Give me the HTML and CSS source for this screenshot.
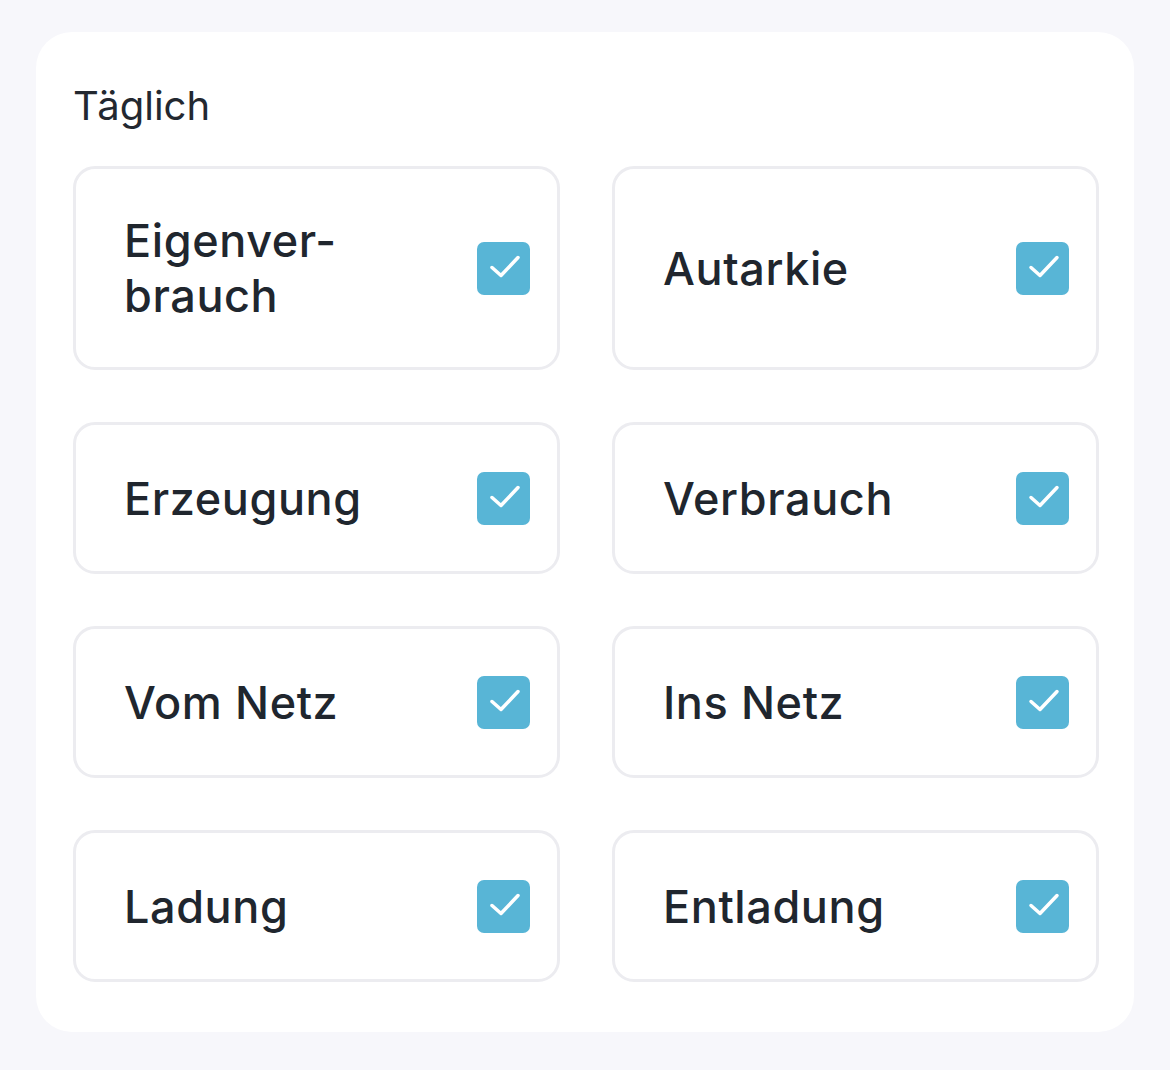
FILE: index.html
```html
<!DOCTYPE html>
<html lang="de">
<head>
<meta charset="utf-8">
<link rel="stylesheet" href="styles.css">
</head>
<body>
<div class="page">
  <section class="card">
    <h2 class="title">Täglich</h2>
    <div class="grid">
      <label class="tile tall"><span class="label">Eigenver&shy;brauch</span><span class="box"><svg viewBox="0 0 53 53"><path d="M15 25.5 L24 33.5 L41 15.5"/></svg></span></label>
      <label class="tile tall"><span class="label">Autarkie</span><span class="box"><svg viewBox="0 0 53 53"><path d="M15 25.5 L24 33.5 L41 15.5"/></svg></span></label>
      <label class="tile"><span class="label">Erzeugung</span><span class="box"><svg viewBox="0 0 53 53"><path d="M15 25.5 L24 33.5 L41 15.5"/></svg></span></label>
      <label class="tile"><span class="label">Verbrauch</span><span class="box"><svg viewBox="0 0 53 53"><path d="M15 25.5 L24 33.5 L41 15.5"/></svg></span></label>
      <label class="tile"><span class="label">Vom Netz</span><span class="box"><svg viewBox="0 0 53 53"><path d="M15 25.5 L24 33.5 L41 15.5"/></svg></span></label>
      <label class="tile"><span class="label">Ins Netz</span><span class="box"><svg viewBox="0 0 53 53"><path d="M15 25.5 L24 33.5 L41 15.5"/></svg></span></label>
      <label class="tile"><span class="label">Ladung</span><span class="box"><svg viewBox="0 0 53 53"><path d="M15 25.5 L24 33.5 L41 15.5"/></svg></span></label>
      <label class="tile"><span class="label">Entladung</span><span class="box"><svg viewBox="0 0 53 53"><path d="M15 25.5 L24 33.5 L41 15.5"/></svg></span></label>
    </div>
  </section>
</div>
</body>
</html>
```
FILE: styles.css
```css
* { box-sizing: border-box; }
html, body { margin: 0; padding: 0; }
body {
  background: #f7f7fb;
  font-family: Inter, "Noto Sans", sans-serif;
  color: #20262e;
  width: 1170px;
  height: 1070px;
}
.page {
  padding: 32px 36px 38px 36px;
}
.card {
  background: #ffffff;
  border-radius: 36px;
  padding: 54px 36px 51px 37px;
  height: 1000px;
}
.title {
  margin: 0 0 40px 0;
  font-size: 40px;
  line-height: 40px;
  font-weight: 400;
  color: #232830;
  height: 40px;
}
.grid {
  display: grid;
  grid-template-columns: 487px 487px;
  column-gap: 52px;
  row-gap: 52px;
}
.tile {
  display: flex;
  align-items: center;
  justify-content: space-between;
  border: 3px solid #ececf0;
  border-radius: 22px;
  min-height: 152px;
  padding: 44px 27px 44px 48px;
}
.tile.tall { min-height: 203px; }
.label {
  font-size: 45px;
  font-weight: 500;
  line-height: 55px;
  letter-spacing: 0.6px;
  max-width: 290px;
  hyphens: manual;
  color: #20262e;
}
.box {
  width: 53px;
  height: 53px;
  border-radius: 7px;
  background: #58b5d6;
  flex: none;
  display: flex;
}
.box svg { width: 53px; height: 53px; }
.box path {
  fill: none;
  stroke: #ffffff;
  stroke-width: 3.5;
  stroke-linecap: round;
  stroke-linejoin: round;
}
```
